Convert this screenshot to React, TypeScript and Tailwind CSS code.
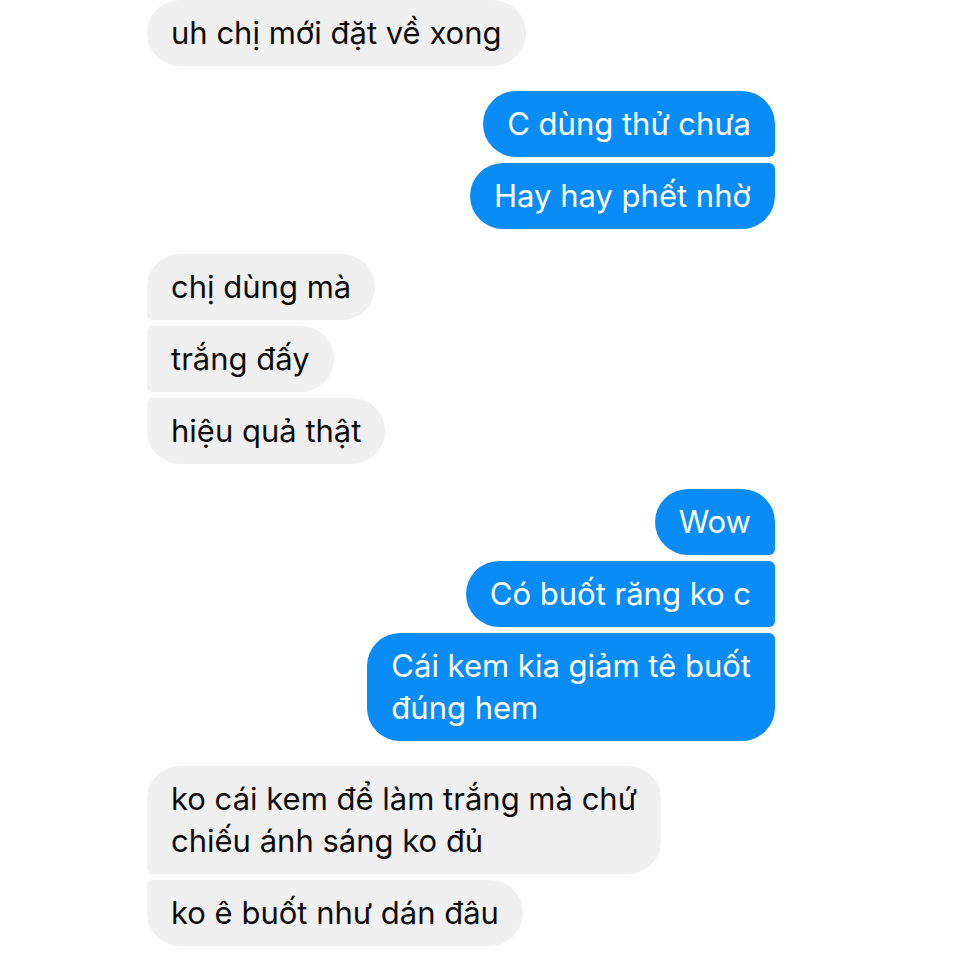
const groups = [
  { side: 'left', messages: ['uh chị mới đặt về xong'] },
  { side: 'right', messages: ['C dùng thử chưa', 'Hay hay phết nhờ'] },
  { side: 'left', messages: ['chị dùng mà', 'trắng đấy', 'hiệu quả thật'] },
  { side: 'right', messages: ['Wow', 'Có buốt răng ko c', 'Cái kem kia giảm tê buốt\nđúng hem'] },
  { side: 'left', messages: ['ko cái kem để làm trắng mà chứ\nchiếu ánh sáng ko đủ', 'ko ê buốt như dán đâu'] },
]

function cornerClass(side: string, i: number, n: number) {
  if (n === 1) return 'rounded-[33px]'
  const first = i === 0
  const last = i === n - 1
  if (side === 'left') {
    if (first) return 'rounded-[33px] rounded-bl-[6px]'
    if (last) return 'rounded-[33px] rounded-tl-[6px]'
    return 'rounded-[33px] rounded-tl-[6px] rounded-bl-[6px]'
  }
  if (first) return 'rounded-[33px] rounded-br-[6px]'
  if (last) return 'rounded-[33px] rounded-tr-[6px]'
  return 'rounded-[33px] rounded-tr-[6px] rounded-br-[6px]'
}

export default function App() {
  return (
    <div className="h-[960px] w-[960px] overflow-hidden bg-white pl-[147px] pr-[185px] font-['Inter',sans-serif]">
      <div className="flex flex-col gap-[25px]">
        {groups.map((group, g) => (
          <div
            key={g}
            className={`flex flex-col gap-[6px] ${group.side === 'left' ? 'items-start' : 'items-end'}`}
          >
            {group.messages.map((msg, i) => (
              <div
                key={i}
                className={`whitespace-pre-line px-[24px] py-[12px] text-[31px] leading-[42px] ${cornerClass(
                  group.side,
                  i,
                  group.messages.length
                )} ${group.side === 'left' ? 'bg-[#f0f0f0] text-[#0d0d0d]' : 'bg-[#0a8cf6] text-white'}`}
              >
                {msg}
              </div>
            ))}
          </div>
        ))}
      </div>
    </div>
  )
}
